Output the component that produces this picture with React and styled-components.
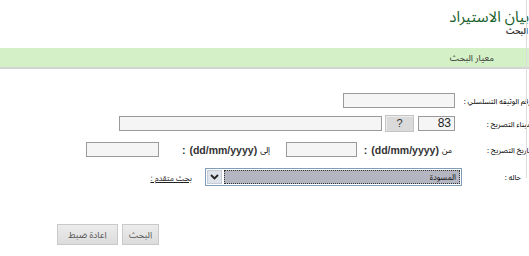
import styled, { createGlobalStyle } from 'styled-components';

const arabic = `"Noto Sans Arabic UI", "Noto Sans Arabic", "DejaVu Sans Condensed", "DejaVu Sans", sans-serif`;

const GlobalStyle = createGlobalStyle`
  html, body {
    margin: 0;
    padding: 0;
    background: #ffffff;
    overflow: hidden;
  }
  body {
    font-family: ${arabic};
  }
`;

const Viewport = styled.div`
  position: relative;
  width: 529px;
  height: 256px;
  overflow: hidden;
`;

const EdgeLine = styled.div`
  position: absolute;
  left: 526px;
  top: 0;
  width: 1px;
  height: 178px;
  background: #dcdcdc;
`;

const Page = styled.div`
  direction: rtl;
  margin-right: -2px;
  padding-top: 6px;
`;

const Title = styled.div`
  font-size: 15px;
  line-height: 20px;
  padding-right: 2px;
  color: #16602c;
  white-space: nowrap;
`;

const SubTitle = styled.div`
  font-size: 8px;
  font-weight: bold;
  line-height: 10px;
  padding-right: 3px;
  color: #333;
`;

const SectionBar = styled.div`
  margin-top: 12px;
  height: 19px;
  line-height: 19px;
  background: #d4f0c6;
  border-bottom: 2px solid #d4d4d4;
  padding-right: 37px;
  font-size: 9px;
  color: #333;
`;

const Form = styled.div`
  margin-top: 20px;
`;

const Row = styled.div`
  display: flex;
  align-items: center;
  height: ${(p) => p.$h}px;
`;

const Label = styled.div`
  width: ${(p) => p.$w}px;
  padding-right: ${(p) => p.$pr || 0}px;
  box-sizing: border-box;
  flex: none;
  font-size: 7.5px;
  color: #000;
  white-space: nowrap;
`;

const Input = styled.div`
  width: ${(p) => p.$w}px;
  height: 15px;
  margin-right: ${(p) => p.$mr || 0}px;
  flex: none;
  box-sizing: border-box;
  background: #f5f5f5;
  border: 1px solid #9a9a9a;
  font-family: "Liberation Sans", sans-serif;
  font-size: 12px;
  line-height: 13px;
  padding-right: 3px;
  color: #222;
`;

const HelpButton = styled.div`
  width: 29px;
  height: 17px;
  margin-right: 4px;
  flex: none;
  box-sizing: border-box;
  background: #dadada;
  border: 1px solid #c4c4c4;
  box-shadow: inset 1px 1px 0 #ececec;
  text-align: center;
  font-family: "Liberation Sans", sans-serif;
  font-size: 11px;
  line-height: 15px;
  color: #333;
`;

const Hint = styled.div`
  width: ${(p) => p.$w}px;
  flex: none;
  display: flex;
  align-items: center;
  padding-right: ${(p) => p.$pr || 0}px;
  box-sizing: border-box;
  white-space: nowrap;
  font-size: 8px;
  color: #000;
`;

const Format = styled.span`
  direction: ltr;
  margin-right: 3px;
  font-family: "Liberation Sans", sans-serif;
  font-weight: bold;
  font-size: 10.5px;
  color: #333;
`;

const Colon = styled.span`
  margin-right: 4px;
  font-family: "Liberation Sans", sans-serif;
  font-weight: bold;
  font-size: 10.5px;
  color: #333;
`;

const Select = styled.div`
  width: 257px;
  height: 18px;
  flex: none;
  box-sizing: border-box;
  border: 1px solid #7f9db9;
  padding: 1px;
  display: flex;
  direction: ltr;
  background: #fff;
`;

const SelectArrow = styled.div`
  width: 15px;
  flex: none;
  background: #dfe3ea;
  border: 1px solid #c5ccd8;
  box-sizing: border-box;
  display: flex;
  align-items: center;
  justify-content: center;
`;

const SelectValue = styled.div`
  flex: 1;
  margin-left: 2px;
  background: #b3b5c1;
  outline: 1px dotted #333;
  outline-offset: -1px;
  direction: rtl;
  font-size: 8px;
  line-height: 14px;
  padding-right: 4px;
  color: #111;
`;

const AdvancedLink = styled.a`
  margin-right: 13px;
  font-size: 8px;
  color: #222;
  text-decoration: underline;
  white-space: nowrap;
`;

const Actions = styled.div`
  display: flex;
  gap: 4px;
  margin-top: 34px;
  margin-right: 372px;
`;

const Button = styled.div`
  width: ${(p) => p.$w}px;
  height: 21px;
  box-sizing: border-box;
  background: linear-gradient(#ececec, #dcdcdc);
  border: 1px solid #c9c9c9;
  text-align: center;
  font-size: 9px;
  line-height: 19px;
  color: #555;
`;

const Chevron = () => (
  <svg width="9" height="6" viewBox="0 0 9 6">
    <path d="M1 1 L4.5 4.5 L8 1" fill="none" stroke="#222" strokeWidth="1.8" />
  </svg>
);

export default function App() {
  return (
    <Viewport>
      <GlobalStyle />
      <Page>
        <Title>بيان الاستيراد</Title>
        <SubTitle>البحث</SubTitle>
        <SectionBar>معيار البحث</SectionBar>
        <Form>
          <Row $h={23}>
            <Label $w={76}>رقم الوثيقه التسلسلي :</Label>
            <Input $w={112} />
          </Row>
          <Row $h={23}>
            <Label $w={76}>ميناء التصريح :</Label>
            <Input $w={37}>83</Input>
            <HelpButton>?</HelpButton>
            <Input $w={263} $mr={3} />
          </Row>
          <Row $h={29}>
            <Label $w={72}>تاريخ التصريح :</Label>
            <Hint $w={102} $pr={7}>
              <span>من</span>
              <Format>(dd/mm/yyyy)</Format>
              <Colon>:</Colon>
            </Hint>
            <Input $w={71} />
            <Hint $w={127} $pr={16}>
              <span>إلى</span>
              <Format>(dd/mm/yyyy)</Format>
              <Colon>:</Colon>
            </Hint>
            <Input $w={73} />
          </Row>
          <Row $h={26}>
            <Label $w={69} $pr={10}>حاله :</Label>
            <Select>
              <SelectArrow>
                <Chevron />
              </SelectArrow>
              <SelectValue>المسودة</SelectValue>
            </Select>
            <AdvancedLink>بحث متقدم :</AdvancedLink>
          </Row>
        </Form>
        <Actions>
          <Button $w={37}>البحث</Button>
          <Button $w={61}>اعادة ضبط</Button>
        </Actions>
      </Page>
      <EdgeLine />
    </Viewport>
  );
}
